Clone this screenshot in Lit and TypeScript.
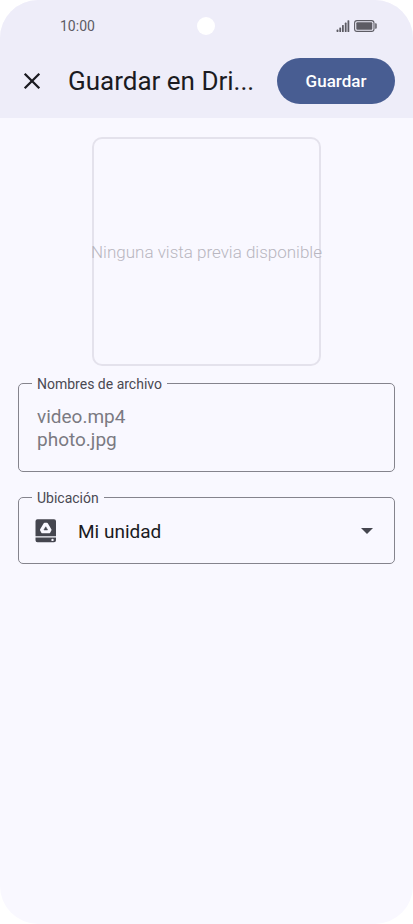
import { LitElement, html, css } from "lit";
import { customElement, property } from "lit/decorators.js";

@customElement("status-bar")
class StatusBar extends LitElement {
  static styles = css`
    :host {
      display: grid;
      grid-template-columns: 1fr auto 1fr;
      align-items: center;
      height: 50px;
      padding: 1px 36px 0 60px;
      margin-bottom: -1px;
      font-size: 14px;
      color: #5d5c64;
    }
    .camera {
      width: 18px;
      height: 18px;
      margin-right: 26px;
      border-radius: 50%;
      background: #fff;
    }
    .icons {
      justify-self: end;
      display: flex;
      align-items: center;
      gap: 4px;
    }
    svg {
      display: block;
    }
  `;

  render() {
    return html`
      <span>10:00</span>
      <span class="camera"></span>
      <span class="icons">
        <svg width="14" height="12" viewBox="0 0 14 12" fill="currentColor" aria-label="Señal">
          <rect x="0.6" y="9.6" width="1.8" height="2.4" rx="0.6" />
          <rect x="3.3" y="7.5" width="1.8" height="4.5" rx="0.6" />
          <rect x="6" y="5" width="1.8" height="7" rx="0.6" />
          <rect x="8.8" y="2.6" width="1.8" height="9.4" rx="0.6" />
          <rect x="11.5" y="0.2" width="1.8" height="11.8" rx="0.6" />
        </svg>
        <svg width="23" height="12" viewBox="0 0 23 12" aria-label="Batería">
          <rect x="0.6" y="0.6" width="19.4" height="10.8" rx="2.4" fill="none" stroke="currentColor" stroke-width="1.1" />
          <rect x="2.3" y="2.3" width="16" height="7.4" rx="1" fill="currentColor" />
          <path d="M21.2 3.2h.5a1 1 0 0 1 1 1v3.6a1 1 0 0 1-1 1h-.5z" fill="currentColor" />
        </svg>
      </span>
    `;
  }
}

@customElement("app-root")
class AppRoot extends LitElement {
  @property({ attribute: false }) files = ["video.mp4", "photo.jpg"];

  static styles = css`
    :host {
      display: block;
      min-height: 100vh;
      box-sizing: border-box;
      overflow: hidden;
      border-radius: 38px;
      background: #f9f8ff;
      color: #1b1b21;
      font-family: Roboto, "Liberation Sans", sans-serif;
    }
    .top {
      background: #eeedf9;
    }
    .bar {
      display: flex;
      align-items: center;
      height: 62px;
      padding: 0 18px 6px 20px;
      gap: 24px;
    }
    .close {
      display: flex;
      padding: 0;
      border: 0;
      background: none;
      color: inherit;
    }
    h1 {
      flex: 1;
      min-width: 0;
      margin: 0;
      white-space: nowrap;
      font-size: 26px;
      line-height: 36px;
      font-weight: 400;
    }
    .save {
      height: 46px;
      min-width: 118px;
      padding: 0 28px;
      border: 0;
      border-radius: 23px;
      background: #485d92;
      color: #fff;
      font: inherit;
      font-size: 17px;
      font-weight: 500;
    }
    main {
      display: flex;
      flex-direction: column;
      padding: 19px 18px;
    }
    .preview {
      display: flex;
      align-items: center;
      justify-content: center;
      align-self: center;
      box-sizing: border-box;
      width: 229px;
      aspect-ratio: 1;
      border: 2px solid #e4e2ec;
      border-radius: 10px;
      white-space: nowrap;
      font-size: 17px;
      font-weight: 300;
      color: #b8b6c0;
    }
    fieldset {
      box-sizing: border-box;
      min-width: 0;
      margin: 8px 0 0;
      padding: 0 18px;
      border: 1px solid #85848d;
      border-radius: 5px;
    }
    .place {
      margin-top: 16px;
    }
    legend {
      margin-left: -5px;
      padding: 2px 5px 0;
      font-size: 14px;
      line-height: 16px;
      color: #4a4952;
    }
    textarea {
      display: block;
      box-sizing: border-box;
      width: 100%;
      height: 79px;
      padding: 13px 0 0;
      border: 0;
      outline: 0;
      resize: none;
      overflow: hidden;
      background: none;
      font: inherit;
      font-size: 19px;
      line-height: 23px;
      color: #7b7a82;
    }
    .row {
      display: flex;
      align-items: center;
      height: 50px;
      padding-bottom: 7px;
    }
    .drive {
      flex: none;
      margin-left: -2px;
      color: #45464f;
    }
    select {
      flex: 1;
      min-width: 0;
      height: 48px;
      padding: 0 0 0 21px;
      border: 0;
      outline: 0;
      appearance: none;
      background: none;
      color: inherit;
      font: inherit;
      font-size: 19px;
    }
    .arrow {
      flex: none;
      margin-right: 3px;
      color: #45464f;
      pointer-events: none;
    }
    svg {
      display: block;
    }
  `;

  render() {
    return html`
      <header class="top">
        <status-bar></status-bar>
        <div class="bar">
          <button class="close" aria-label="Cerrar">
            <svg width="24" height="24" viewBox="0 0 24 24" fill="none" stroke="currentColor" stroke-width="2.3">
              <path d="M4.7 4.7L19.3 19.3M19.3 4.7L4.7 19.3" />
            </svg>
          </button>
          <h1>Guardar en Dri...</h1>
          <button class="save">Guardar</button>
        </div>
      </header>
      <main>
        <div class="preview">Ninguna vista previa disponible</div>
        <fieldset>
          <legend><label for="names">Nombres de archivo</label></legend>
          <textarea id="names" .value=${this.files.join("\n")}></textarea>
        </fieldset>
        <fieldset class="place">
          <legend><label for="place">Ubicación</label></legend>
          <div class="row">
            <svg class="drive" width="22" height="24" viewBox="0 0 22 24">
              <path fill="currentColor" d="M2.5 .3h16.500A2 2 0 0 1 21 2.300v15H.5v-15a2 2 0 0 1 2-2zM.5 18.500h20.500v2.800a2 2 0 0 1-2 2H2.500a2 2 0 0 1-2-2z" />
              <path fill="#f9f8ff" stroke="#f9f8ff" stroke-width="2.4" stroke-linejoin="round" d="M9.600 5h2.300l3.400 5.900-1.200 2.200H7.400l-1.200-2.200z" />
              <path fill="currentColor" stroke="currentColor" stroke-width=".6" stroke-linejoin="round" d="M10.750 7.800l1.800 3.100H8.950z" />
              <circle cx="17.500" cy="20.900" r="1.200" fill="#f9f8ff" />
            </svg>
            <select id="place">
              <option>Mi unidad</option>
            </select>
            <svg class="arrow" width="12" height="6" viewBox="0 0 12 6">
              <path fill="currentColor" d="M0 0h12L6 6z" />
            </svg>
          </div>
        </fieldset>
      </main>
    `;
  }
}
